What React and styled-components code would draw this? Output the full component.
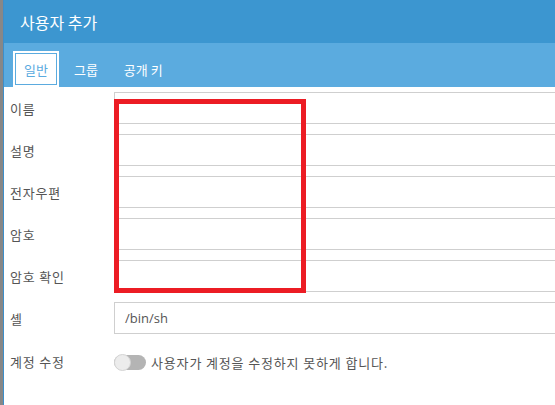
import React from "react";
import styled, { createGlobalStyle } from "styled-components";

const Global = createGlobalStyle`
  html, body { margin: 0; padding: 0; background: #fff; }
  body { font-family: "Open Sans", "Noto Sans CJK KR", sans-serif; }
  #root { width: 555px; height: 405px; overflow: hidden; }
`;

const Frame = styled.div`
  display: flex;
  width: 555px;
  height: 405px;
  border-left: 3px solid #878787;
  box-sizing: border-box;
`;

const Dialog = styled.div`
  flex: 1;
  display: flex;
  flex-direction: column;
  border-left: 1px solid #3d8fca;
  position: relative;
  min-width: 0;
`;

const Header = styled.div`
  height: 43px;
  background: #3c96d0;
  display: flex;
  align-items: center;
  padding-left: 16px;
  color: #fff;
  font-size: 16px;
  font-family: "Noto Sans CJK KR", sans-serif;
`;

const TabBar = styled.div`
  height: 44px;
  background: #5babdf;
  display: flex;
  align-items: flex-end;
  padding-left: 9px;
  gap: 4px;
`;

const Tab = styled.div`
  height: 36px;
  padding: 0 11px;
  display: flex;
  align-items: center;
  box-sizing: border-box;
  font-size: 13px;
  font-family: "Noto Sans CJK KR", sans-serif;
  color: ${(p) => (p.$active ? "#5babdf" : "#fff")};
  background: ${(p) => (p.$active ? "#fff" : "transparent")};
  outline: ${(p) => (p.$active ? "1px solid #5babdf" : "none")};
  outline-offset: -3px;
`;

const Body = styled.div`
  display: grid;
  grid-template-columns: 104px 1fr;
  grid-auto-rows: 32px;
  row-gap: 10px;
  padding: 5px 0 0 6px;
  margin-right: -20px;
`;

const Label = styled.div`
  display: flex;
  align-items: center;
  font-size: 13px;
  letter-spacing: 0.8px;
  color: #555;
  font-family: "Noto Sans CJK KR", sans-serif;
  padding-top: ${(p) => (p.$shift ? "2px" : "0")};
`;

const Input = styled.div`
  border: 1px solid #cfcfcf;
  box-sizing: border-box;
  display: flex;
  align-items: center;
  padding-left: 10px;
  font-size: 13px;
  color: #555;
`;

const ToggleCell = styled.div`
  display: flex;
  align-items: center;
  gap: 5px;
  padding-top: 4px;
  font-size: 13px;
  letter-spacing: 0.85px;
  color: #555;
  font-family: "Noto Sans CJK KR", sans-serif;
`;

const Track = styled.span`
  position: relative;
  display: inline-block;
  width: 32px;
  height: 15px;
  border-radius: 8px;
  background: #b4b4b4;
  flex: none;
`;

const Knob = styled.span`
  position: absolute;
  left: 0;
  top: -1px;
  width: 17px;
  height: 17px;
  border-radius: 50%;
  background: #ececec;
  box-sizing: border-box;
  border: 1px solid #d4d4d4;
`;

const Highlight = styled.div`
  position: absolute;
  left: 110px;
  top: 99px;
  width: 192px;
  height: 194px;
  border: 5px solid #ec1c24;
  box-sizing: border-box;
  pointer-events: none;
`;

const rows = ["이름", "설명", "전자우편", "암호", "암호 확인"];

export default function App() {
  return (
    <>
      <Global />
      <Frame>
        <Dialog>
          <Header>사용자 추가</Header>
          <TabBar>
            <Tab $active>일반</Tab>
            <Tab>그룹</Tab>
            <Tab>공개 키</Tab>
          </TabBar>
          <Body>
            {rows.map((r) => (
              <React.Fragment key={r}>
                <Label>{r}</Label>
                <Input />
              </React.Fragment>
            ))}
            <Label>셸</Label>
            <Input>/bin/sh</Input>
            <Label $shift>계정 수정</Label>
            <ToggleCell>
              <Track>
                <Knob />
              </Track>
              사용자가 계정을 수정하지 못하게 합니다.
            </ToggleCell>
          </Body>
          <Highlight />
        </Dialog>
      </Frame>
    </>
  );
}
